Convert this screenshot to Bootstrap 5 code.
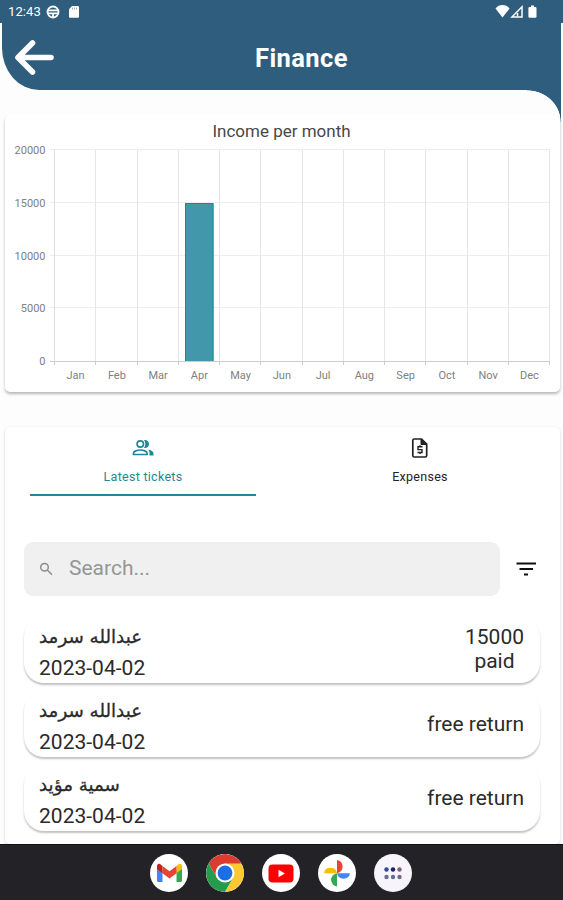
<!DOCTYPE html>
<html lang="en">
<head>
<meta charset="utf-8">
<meta name="viewport" content="width=device-width, initial-scale=1">
<title>Finance</title>
<link href="https://cdn.jsdelivr.net/npm/bootstrap@5.3.0/dist/css/bootstrap.min.css" rel="stylesheet">
<style>
  :root { --brand: #2f5d7d; --accent: #1f8797; }
  body { font-family: Roboto, "DejaVu Sans", sans-serif; background: #fdfdfd; color: #222; height: 900px; overflow: hidden; }
  svg { display: block; flex: none; }
  .status { height: 23px; background: var(--brand); color: #fff; font-size: 13px; line-height: 24px; padding: 0 25px 0 8px; letter-spacing: .1px; }
  .status span { padding-top: 1px; }
  .globe-icon { margin-left: 5px; }
  .sd-icon { margin-left: 8px; }
  .app-head { height: 67px; margin: 0 2px; padding: 0 12px; background: var(--brand); border-bottom-left-radius: 37px 42px; }
  .app-head::after { content: ""; position: absolute; right: 0; top: 100%; width: 34px; height: 32px; background: radial-gradient(ellipse 34px 32px at 0 100%, transparent 98%, var(--brand) 100%); }
  .app-head h1 { font-size: 25.5px; font-weight: 700; line-height: 30px; padding: 3px 0 0 201px; color: #fff; letter-spacing: .4px; }
  .panel { margin: 0 3px 0 5px; background: #fff; border-radius: 5px; }
  .chart-panel { margin-top: 25px; height: 277px; box-shadow: 0 2px 3px rgba(0,0,0,.28); clip-path: inset(0 -4px -6px -4px); }
  .chart-panel text { font-size: 11px; fill: #808080; }
  .chart-panel .title { font-size: 17px; fill: #484848; }
  .tickets-panel { margin-top: 35px; height: 417px; box-shadow: 0 1px 3px rgba(0,0,0,.16); }
  .tabs { padding: 0 27px 0 25px; }
  .tab { height: 69px; padding-top: 10px; font-size: 12.5px; line-height: 16px; letter-spacing: .28px; border-bottom: 2px solid transparent; width: 226px; }
  .tab.active { color: var(--accent); border-color: var(--accent); }
  .tab svg { margin-bottom: 10px; }
  .search-row { padding: 46px 0 0 19px; }
  .search { height: 54px; width: 476px; border-radius: 9px; background: #f0f0f0; color: #969696; font-size: 21px; padding-left: 14px; }
  .search span { padding-left: 15px; }
  .filter { margin-left: 16px; }
  .tickets { padding: 21px 20px 0 19px; }
  .ticket { height: 66px; border-radius: 20px; background: #fff; box-shadow: 0 2px 2px rgba(0,0,0,.24); padding: 0 16px 0 15px; font-size: 21px; line-height: 24px; color: #2a2a2a; clip-path: inset(0 -4px -6px -4px); }
  .ticket > div:first-child { padding-top: 4px; }
  .who { font-family: "DejaVu Sans", sans-serif; font-size: 18.3px; line-height: 31px; height: 31px; text-align: left; -webkit-text-stroke: .3px #2a2a2a; }
  .when { line-height: 32px; letter-spacing: .02px; }
  .amount { padding-bottom: 3px; }
  .dock { height: 56px; background: #232327; border-top: 1px solid #111; gap: 18px; padding-right: 1px; }
  .app { width: 38px; height: 38px; border-radius: 50%; background: #fff; overflow: hidden; }
  .app-drawer { background: #f8f4fc; }
</style>
</head>
<body class="d-flex flex-column">
  <div class="status d-flex justify-content-between align-items-center">
    <div class="d-flex align-items-center">
      <span>12:43</span>
      <svg class="globe-icon" width="14" height="14" viewBox="0 0 14 14" fill="none" stroke="#fff" stroke-width="1.800"><circle cx="7" cy="7" r="5.500"/><path d="M2 5.400h10M2 8.400h10M7 8v4"/></svg>
      <svg class="sd-icon" width="12" height="13" viewBox="0 0 12 13"><path fill="#fff" d="M4 1h6.300L11 2v10l-.7.800H1.700L1 12V4.200z"/><path stroke="#2f5d7d" d="M4.500 2.500v2M6.500 2.500v2M8.500 2.500v2" stroke-width=".5"/></svg>
    </div>
    <svg width="43" height="15" viewBox="0 0 43 15"><path fill="#fff" d="M.5 4.500C4-.1 11-.1 14.600 4.500L7.500 13.500z"/><path d="M17 13 27 2.800V13z" fill="none" stroke="#fff" stroke-width="1.500"/><path d="M22.500 9v3.500" stroke="#fff" stroke-width="1.500"/><path fill="#fff" d="M36 1.500h3V3h1.500l1 .8v9.200l-.8.800h-6.500l-.8-.8V3.800l1-.8H36z"/></svg>
  </div>
  <header class="app-head d-flex align-items-center position-relative">
    <svg width="40" height="36" viewBox="0 0 40 36" fill="none" stroke="#fff" stroke-width="5.600" stroke-linecap="round" stroke-linejoin="round"><path d="M37 18.500H5M18.500 4 4 18.500 18.500 33"/></svg>
    <h1 class="m-0">Finance</h1>
  </header>

  <section class="panel chart-panel">
    <svg id="chart" width="555" height="277" viewBox="5 115 555 277" role="img" aria-label="Income per month"></svg>
  </section>

  <section class="panel tickets-panel">
    <div class="tabs d-flex justify-content-between">
      <div class="tab active d-flex flex-column align-items-center">
        <svg width="22" height="22" viewBox="0 0 22 22" fill="none" stroke="currentColor" stroke-width="1.700"><circle cx="8.300" cy="7" r="3.200"/><path d="M1.500 17.500v-1.300c0-2 4-3.200 6.800-3.200s6.800 1.200 6.800 3.200v1.300z"/><path fill="currentColor" stroke="none" d="M12 3c3-.5 5 1.400 5 4s-2 4.500-5 4c1.800-2.500 1.800-5.500 0-8zM16 12.400c3 .6 5.500 1.800 5.500 4V18.400H17.500v-2.200c0-1.500-.5-2.800-1.500-3.800z"/></svg>
        Latest tickets
      </div>
      <div class="tab d-flex flex-column align-items-center">
        <svg width="22" height="22" viewBox="0 0 22 22" fill="none" stroke="#222" stroke-width="1.700"><path d="M5.300 2h7.200l5.200 5.200V18.500a1.500 1.500 0 0 1-1.500 1.500H5.300a1.500 1.500 0 0 1-1.500-1.500V3.500A1.500 1.500 0 0 1 5.300 2z"/><path d="M12 2v5.500h5.500z" fill="#222" stroke-width="1"/><path d="M13.500 9.700H9v2.900h4v2.900H8.500M11 8.200v1.500M11 15.500V17" stroke-width="1.400"/></svg>
        Expenses
      </div>
    </div>
    <div class="search-row d-flex align-items-center">
      <div class="search d-flex align-items-center">
        <svg width="16" height="16" viewBox="0 0 16 16" fill="none" stroke="#8d8d8d" stroke-width="1.500"><circle cx="6.500" cy="6.200" r="3.800"/><path d="m9.500 9.200 4.500 4.500"/></svg>
        <span>Search...</span>
      </div>
      <svg class="filter" width="22" height="16" viewBox="0 0 22 16" stroke="#111" stroke-width="2"><path d="M.5 2.500H20M3.500 8H17M8 13.500h4"/></svg>
    </div>
    <div class="tickets d-flex flex-column gap-2">
      <div class="ticket d-flex justify-content-between align-items-center">
        <div><div class="who"><bdi>عبدالله سرمد</bdi></div><div class="when">2023-04-02</div></div>
        <div class="amount text-center">15000<br>paid</div>
      </div>
      <div class="ticket d-flex justify-content-between align-items-center">
        <div><div class="who"><bdi>عبدالله سرمد</bdi></div><div class="when">2023-04-02</div></div>
        <div>free return</div>
      </div>
      <div class="ticket d-flex justify-content-between align-items-center">
        <div><div class="who"><bdi>سمية مؤيد</bdi></div><div class="when">2023-04-02</div></div>
        <div>free return</div>
      </div>
    </div>
  </section>

  <nav class="dock d-flex justify-content-center align-items-center">
    <div class="app"><svg width="38" height="38" viewBox="0 0 38 38"><path fill="#4285f4" d="M7 12.500 12.500 16v12H8.500A1.500 1.500 0 0 1 7 26.500z"/><path fill="#34a853" d="M26.500 16 32 12.500v14a1.500 1.500 0 0 1-1.500 1.500h-4z"/><path fill="#fbbc04" d="M26.500 12l2.500-2c1.500-.8 3 .3 3 2v3l-5.500 4.200z"/><path fill="#c5221f" d="M7 15v-3c0-1.700 1.500-2.800 3-2l2.500 2v7.200z"/><path fill="#ea4335" d="m12.500 12 7 5.200 7-5.200v7.200l-7 5.200-7-5.200z"/></svg></div>
    <div class="app"><svg width="38" height="38" viewBox="0 0 38 38"><path fill="#dc3b30" d="M19 19 2.550 9.500A19 19 0 0 1 35.450 9.500z"/><path fill="#dc3b30" d="M2.550 9.500H19v9.500l-8.200 4.700z"/><path fill="#249c4b" d="M2.550 9.500 10.800 23.700 19 19l8.200 4.700L19 38A19 19 0 0 1 2.550 9.500z"/><path fill="#fcc934" d="M19 9.500H35.450A19 19 0 0 1 19 38l8.200-14.300L19 19z"/><circle cx="19" cy="19" r="9.500" fill="#fff"/><circle cx="19" cy="19" r="7.400" fill="#1a6fe8"/></svg></div>
    <div class="app"><svg width="38" height="38" viewBox="0 0 38 38"><rect x="6.500" y="10.500" width="25" height="18" rx="4" fill="#f00"/><path fill="#fff" d="m16.500 15.700 6.500 3.800-6.500 3.800z"/></svg></div>
    <div class="app"><svg width="38" height="38" viewBox="0 0 38 38"><path fill="#ea4335" d="M19 6a6.700 6.700 0 0 1 0 13.200z"/><path fill="#4285f4" d="M32 19.200a6.600 6.600 0 0 1-13 0z"/><path fill="#34a853" d="M19 32.500a6.700 6.700 0 0 1 0-13.300z"/><path fill="#fbbc04" d="M6 19.200a6.600 6.600 0 0 1 13 0z"/></svg></div>
    <div class="app app-drawer"><svg width="38" height="38" viewBox="0 0 38 38"><g fill="#34478f"><circle cx="12.500" cy="15.500" r="2.200"/><circle cx="19" cy="15.500" r="2.200" fill="#17207a"/><circle cx="25.500" cy="15.500" r="2.200" fill="#85606f"/></g><g fill="#6b6d85"><circle cx="12.500" cy="23" r="2.200"/><circle cx="19" cy="23" r="2.200"/><circle cx="25.500" cy="23" r="2.200"/></g></svg></div>
  </nav>

<script src="https://cdn.jsdelivr.net/npm/bootstrap@5.3.0/dist/js/bootstrap.bundle.min.js"></script>
<script>
  const months = ['Jan','Feb','Mar','Apr','May','Jun','Jul','Aug','Sep','Oct','Nov','Dec'];
  const income = [0,0,0,15000,0,0,0,0,0,0,0,0];
  const left = 55, right = 550, top0 = 150, base = 361, max = 20000, step = (right - left) / 12;
  const y = v => base - (base - top0) * v / max;
  let out = '<text class="title" x="281.500" y="137" text-anchor="middle">Income per month</text>';
  for (let v = 0; v <= max; v += 5000) {
    const py = Math.round(y(v)) + (v ? -.5 : .5);
    out += `<path d="M50 ${py}H${right}" stroke="${v ? '#ededed' : '#ccc'}"/><text x="45.500" y="${Math.round(y(v)) + 4}" text-anchor="end">${v}</text>`;
  }
  for (let i = 0; i <= 12; i++) {
    const px = Math.round(left + i * step) - .5;
    out += `<path d="M${px} ${top0}V${base}" stroke="${i ? '#e6e6e6' : '#ddd'}"/><path d="M${px} ${base}v4" stroke="#ccc"/>`;
  }
  months.forEach((m, i) => {
    const cx = left + (i + .5) * step;
    out += `<text x="${cx}" y="379" text-anchor="middle">${m}</text>`;
    if (income[i]) {
      const x0 = Math.round(cx - 14), y0 = Math.round(y(income[i]));
      out += `<rect x="${x0}" y="${y0}" width="28.500" height="${base - y0}" fill="#4297aa"/><path d="M${x0 + .5} ${base}V${y0 + .5}h27.500V${base}" fill="none" stroke="#108d9c"/>`;
    }
  });
  document.getElementById('chart').innerHTML = out;
</script>
</body>
</html>
